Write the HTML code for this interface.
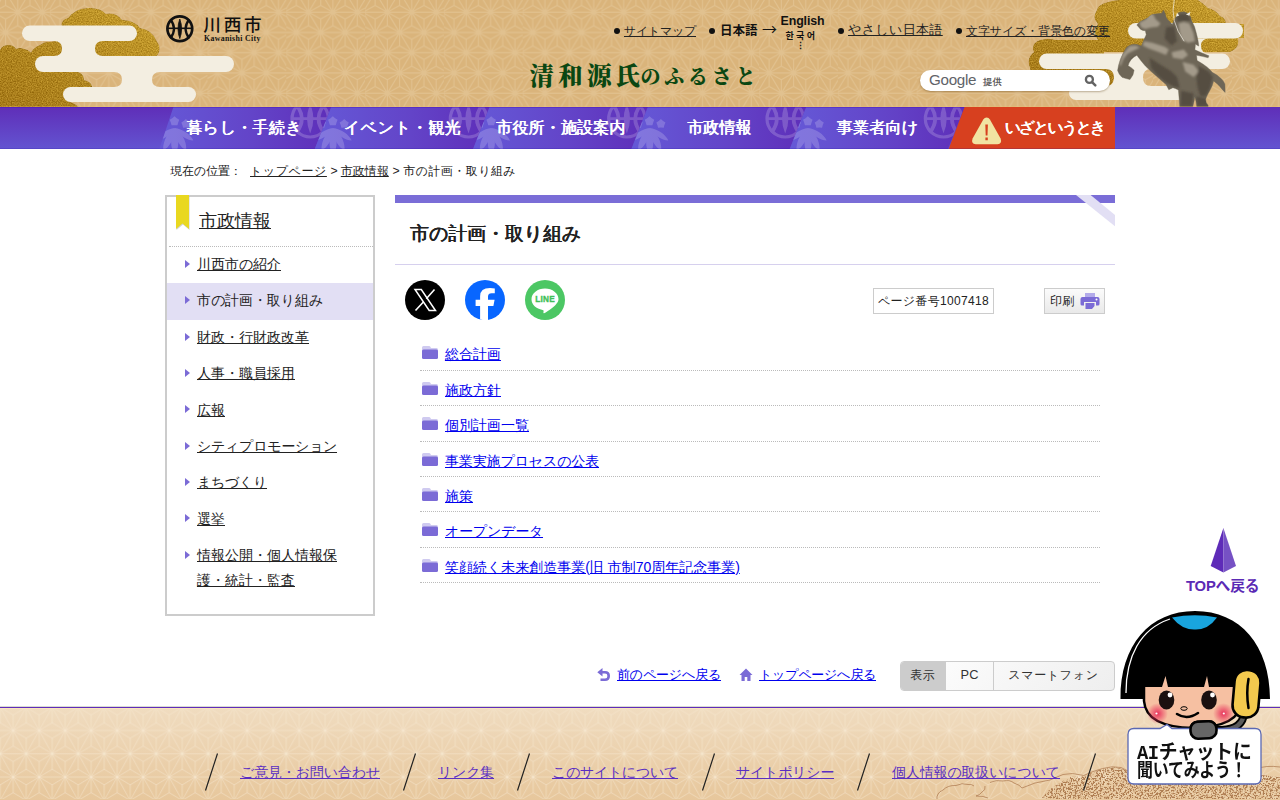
<!DOCTYPE html>
<html lang="ja">
<head>
<meta charset="utf-8">
<title>市の計画・取り組み｜川西市</title>
<style>
*{box-sizing:border-box}
html,body{margin:0;padding:0}
body{width:1280px;height:800px;overflow:hidden;position:relative;background:#fff;color:#222;
 font-family:"Liberation Sans","WenQuanYi Zen Hei Sharp","WenQuanYi Zen Hei",sans-serif;font-size:14px;line-height:1.5}
a{color:#0000ee;text-decoration:underline}
svg{display:block}
/* header */
#hd{position:absolute;left:0;top:0;width:1280px;height:107px;background:#dab47b;overflow:hidden}
#hd:after{content:"";position:absolute;left:0;top:106px;width:1280px;height:1px;background:rgba(240,200,110,.3)}
#hd svg.bg{position:absolute;left:0;top:0}
#logo{position:absolute;left:0;top:0}
#logo svg{position:absolute;left:165px;top:14px}
#logo .jp{position:absolute;left:203.3px;top:10.2px;font-family:"Liberation Sans","Noto Sans CJK JP",sans-serif;font-weight:500;font-size:17.6px;line-height:30px;color:#111;letter-spacing:2.8px;white-space:nowrap}
#logo .en{position:absolute;left:204px;top:33px;font-family:"Liberation Serif",serif;font-weight:bold;font-size:7.8px;line-height:11px;color:#111;white-space:nowrap;letter-spacing:.35px}
#hlinks{position:absolute;top:0;left:0;color:#111}
#hlinks a{color:#222;position:absolute;white-space:nowrap;line-height:16px}
#hlinks i{position:absolute;width:6px;height:6px;border-radius:50%;background:#111}
#hlinks .lang{position:absolute;white-space:nowrap;font-weight:bold;color:#111;font-family:"Liberation Sans","Noto Sans CJK JP",sans-serif}
#catch{position:absolute;left:0;top:0;font-family:"Liberation Serif","Noto Serif CJK JP","Noto Serif CJK SC",serif;font-weight:900;color:#0a4712;white-space:nowrap}
#catch span{position:absolute;line-height:36px}
#search{position:absolute;left:920px;top:70px;width:190px;height:21px;border-radius:11px;background:#fff;box-shadow:0 1px 2px rgba(80,50,0,.35)}
#search .g{position:absolute;left:9px;top:-1px;font-size:15.2px;line-height:21px;color:#5f6368;font-family:"Liberation Sans",sans-serif;letter-spacing:-.3px}
#search .t{position:absolute;left:63px;top:1px;font-size:9.4px;line-height:21px;color:#5a5a5a;font-weight:normal;text-shadow:.4px 0 0 #5a5a5a}
#search svg{position:absolute;left:164px;top:4px}
/* nav */
#nav{position:absolute;left:0;top:107px;width:1280px;height:42px;background:linear-gradient(to bottom,#5f2eb8,#6354d1);overflow:hidden}
#nav:before,#nav:after{content:"";position:absolute;left:0;width:1280px;height:1px;z-index:3}
#nav:before{top:0;width:964px;background:rgba(70,20,190,.4)}
#nav:after{bottom:0;background:rgba(30,10,160,.18)}
#nav svg{position:absolute;left:0;top:0}
#nav .it{position:absolute;top:0;width:158.33px;text-align:center;height:42px;color:#fff;font-weight:normal;text-shadow:.55px 0 0 #fff,-.2px 0 0 #fff;font-size:16px;line-height:42px;white-space:nowrap}
/* breadcrumb */
#pan{position:absolute;left:0;top:162px;color:#222}
#pan>span,#pan>a{position:absolute;top:0;line-height:18px;white-space:nowrap;font-size:12px}
#pan a{color:#222}
/* side */
#side{position:absolute;left:165px;top:195px;width:210px;height:421px;border:2px solid #ccc;background:#fff}
#side h2{position:absolute;left:32px;top:11px;margin:0;font-size:18px;line-height:26px;font-weight:normal}
#side h2 a{color:#222}
#side .rb{position:absolute;left:7px;top:-2px}
#side .hr{position:absolute;left:2px;top:49px;width:204px;border-top:1px dotted #bbb}
#side ul{list-style:none;margin:0;padding:0;position:absolute;left:0;top:50px;width:206px}
#side li{position:relative;padding:5.5px 30px 6.33px 30px;line-height:24.5px;font-size:14px}
#side li a{color:#222}
#side li.cur{background:#e2dff4}
#side li.u{padding-top:4.5px;padding-bottom:7.33px}
#side li:before{content:"";position:absolute;left:18px;top:13px;border-left:5px solid #7b6bd6;border-top:4px solid transparent;border-bottom:4px solid transparent}
/* main */
#main{position:absolute;left:395px;top:194px;width:720px}
#main .bar{position:absolute;left:0;top:1px;width:720px;height:8px;background:#7a6dd7}
#main .cn{position:absolute;left:670px;top:1px}
#main h1{position:absolute;left:15px;top:25px;margin:0;font-size:19px;line-height:30px;font-weight:normal;text-shadow:.6px 0 0 #222,-.2px 0 0 #222;color:#222;white-space:nowrap}
#main .h1b{position:absolute;left:0;top:70px;width:720px;border-top:1px solid #d6d0ee}
.sns{position:absolute;top:86px}
.pnum{position:absolute;left:478px;top:94px;width:121px;height:26px;border:1px solid #ccc;background:#fff;font-size:12px;line-height:24px;text-align:center;white-space:nowrap}
.prt{position:absolute;left:649px;top:94px;width:61px;height:26px;border:1px solid #ccc;background:linear-gradient(to bottom,#fbfbfb,#e9e9e9);font-size:12px;line-height:24px;padding-left:5px;white-space:nowrap}
.prt svg{position:absolute;left:34.5px;top:3px}
#list{position:absolute;left:25px;top:0;width:680px;list-style:none;margin:0;padding:0}
#list li{position:absolute;left:0;width:680px;height:36px;padding:0 0 0 25px;line-height:36px;font-size:14px;white-space:nowrap}
#list li svg{position:absolute;left:2px;top:10px}
#list li i{position:absolute;left:0;width:680px;height:0;border-top:1px dotted #bbb}
/* bottom links */
#back{position:absolute;left:0;top:0;font-size:13px}
#back a{position:absolute;white-space:nowrap;line-height:20px;top:665px}
#back svg{position:absolute}
#sw{position:absolute;left:900px;top:661px;width:215px;height:30px;border:1px solid #ccc;border-radius:4px;overflow:hidden;background:linear-gradient(135deg,#fff,#eee);font-size:12px;color:#333}
#sw span{position:absolute;top:0;height:28px;line-height:26px;text-align:center;white-space:nowrap}
/* footer */
#ft{position:absolute;left:0;top:706px;width:1280px;height:94px;background:linear-gradient(to bottom,#f0dcc0,#e7c79c);border-top:1px solid #d9dbd3;overflow:hidden}
#ft svg.bg{position:absolute;left:0;top:0}
#ft a{position:absolute;top:55px;color:#5a2fc2;font-size:14px;line-height:20px;white-space:nowrap}
/* floats */
#top{position:absolute;left:0;top:0}
#top .t{position:absolute;left:1186px;top:575px;font-family:"Liberation Sans","Noto Sans CJK JP",sans-serif;font-weight:bold;font-size:14.8px;line-height:22px;color:#5b2ab5;white-space:nowrap;letter-spacing:-.2px}
#ai{position:absolute;left:1110px;top:605px}
#ai .tx{position:absolute;left:0;top:0;font-family:"Liberation Sans","Noto Sans CJK JP",sans-serif;font-weight:bold;color:#111;white-space:nowrap}
#ai .tx span{position:absolute;left:27px;line-height:22px;transform-origin:0 50%}
#ai .tx .l1{top:136px;font-size:20px;transform:scaleX(.94);letter-spacing:-.2px}
#ai .tx .l1 b{font-family:"Liberation Mono",monospace;font-size:20px;letter-spacing:-.5px}
#ai .tx .l2{top:155px;font-size:19px;transform:scaleX(.84);letter-spacing:-.3px}
</style>
</head>
<body>
<div id="hd">
<svg class="bg" width="1280" height="107" viewBox="0 0 1280 107">
<defs>
<pattern id="asa" width="78.80" height="40.50" patternUnits="userSpaceOnUse" patternTransform="translate(49.85,0)">
<path d="M-26.50 -28.30L-2.10 -28.30M-26.50 -28.30L-14.30 -8.05M-26.50 -28.30L-38.70 -8.05M-26.50 -28.30L-14.30 -21.55M-26.50 -28.30L-38.70 -21.55M-26.50 -28.30L-14.30 -35.05M-26.50 -28.30L-38.70 -35.05M-26.50 -28.30L-26.50 -14.80M-26.50 -28.30L-26.50 -41.80M-2.10 -28.30L22.30 -28.30M-2.10 -28.30L10.10 -8.05M-2.10 -28.30L-14.30 -8.05M-2.10 -28.30L10.10 -21.55M-2.10 -28.30L-14.30 -21.55M-2.10 -28.30L10.10 -35.05M-2.10 -28.30L-14.30 -35.05M-2.10 -28.30L-2.10 -14.80M-2.10 -28.30L-2.10 -41.80M22.30 -28.30L46.70 -28.30M22.30 -28.30L34.50 -8.05M22.30 -28.30L10.10 -8.05M22.30 -28.30L34.50 -21.55M22.30 -28.30L10.10 -21.55M22.30 -28.30L34.50 -35.05M22.30 -28.30L10.10 -35.05M22.30 -28.30L22.30 -14.80M22.30 -28.30L22.30 -41.80M46.70 -28.30L71.10 -28.30M46.70 -28.30L58.90 -8.05M46.70 -28.30L34.50 -8.05M46.70 -28.30L58.90 -21.55M46.70 -28.30L34.50 -21.55M46.70 -28.30L58.90 -35.05M46.70 -28.30L34.50 -35.05M46.70 -28.30L46.70 -14.80M46.70 -28.30L46.70 -41.80M71.10 -28.30L95.50 -28.30M71.10 -28.30L83.30 -8.05M71.10 -28.30L58.90 -8.05M71.10 -28.30L83.30 -21.55M71.10 -28.30L58.90 -21.55M71.10 -28.30L83.30 -35.05M71.10 -28.30L58.90 -35.05M71.10 -28.30L71.10 -14.80M71.10 -28.30L71.10 -41.80M95.50 -28.30L119.90 -28.30M95.50 -28.30L107.70 -8.05M95.50 -28.30L83.30 -8.05M95.50 -28.30L107.70 -21.55M95.50 -28.30L83.30 -21.55M95.50 -28.30L107.70 -35.05M95.50 -28.30L83.30 -35.05M95.50 -28.30L95.50 -14.80M95.50 -28.30L95.50 -41.80M-14.30 -8.05L10.10 -8.05M-14.30 -8.05L-2.10 12.20M-14.30 -8.05L-26.50 12.20M-14.30 -8.05L-2.10 -1.30M-14.30 -8.05L-26.50 -1.30M-14.30 -8.05L-2.10 -14.80M-14.30 -8.05L-26.50 -14.80M-14.30 -8.05L-14.30 5.45M-14.30 -8.05L-14.30 -21.55M10.10 -8.05L34.50 -8.05M10.10 -8.05L22.30 12.20M10.10 -8.05L-2.10 12.20M10.10 -8.05L22.30 -1.30M10.10 -8.05L-2.10 -1.30M10.10 -8.05L22.30 -14.80M10.10 -8.05L-2.10 -14.80M10.10 -8.05L10.10 5.45M10.10 -8.05L10.10 -21.55M34.50 -8.05L58.90 -8.05M34.50 -8.05L46.70 12.20M34.50 -8.05L22.30 12.20M34.50 -8.05L46.70 -1.30M34.50 -8.05L22.30 -1.30M34.50 -8.05L46.70 -14.80M34.50 -8.05L22.30 -14.80M34.50 -8.05L34.50 5.45M34.50 -8.05L34.50 -21.55M58.90 -8.05L83.30 -8.05M58.90 -8.05L71.10 12.20M58.90 -8.05L46.70 12.20M58.90 -8.05L71.10 -1.30M58.90 -8.05L46.70 -1.30M58.90 -8.05L71.10 -14.80M58.90 -8.05L46.70 -14.80M58.90 -8.05L58.90 5.45M58.90 -8.05L58.90 -21.55M83.30 -8.05L107.70 -8.05M83.30 -8.05L95.50 12.20M83.30 -8.05L71.10 12.20M83.30 -8.05L95.50 -1.30M83.30 -8.05L71.10 -1.30M83.30 -8.05L95.50 -14.80M83.30 -8.05L71.10 -14.80M83.30 -8.05L83.30 5.45M83.30 -8.05L83.30 -21.55M107.70 -8.05L132.10 -8.05M107.70 -8.05L119.90 12.20M107.70 -8.05L95.50 12.20M107.70 -8.05L119.90 -1.30M107.70 -8.05L95.50 -1.30M107.70 -8.05L119.90 -14.80M107.70 -8.05L95.50 -14.80M107.70 -8.05L107.70 5.45M107.70 -8.05L107.70 -21.55M-26.50 12.20L-2.10 12.20M-26.50 12.20L-14.30 32.45M-26.50 12.20L-38.70 32.45M-26.50 12.20L-14.30 18.95M-26.50 12.20L-38.70 18.95M-26.50 12.20L-14.30 5.45M-26.50 12.20L-38.70 5.45M-26.50 12.20L-26.50 25.70M-26.50 12.20L-26.50 -1.30M-2.10 12.20L22.30 12.20M-2.10 12.20L10.10 32.45M-2.10 12.20L-14.30 32.45M-2.10 12.20L10.10 18.95M-2.10 12.20L-14.30 18.95M-2.10 12.20L10.10 5.45M-2.10 12.20L-14.30 5.45M-2.10 12.20L-2.10 25.70M-2.10 12.20L-2.10 -1.30M22.30 12.20L46.70 12.20M22.30 12.20L34.50 32.45M22.30 12.20L10.10 32.45M22.30 12.20L34.50 18.95M22.30 12.20L10.10 18.95M22.30 12.20L34.50 5.45M22.30 12.20L10.10 5.45M22.30 12.20L22.30 25.70M22.30 12.20L22.30 -1.30M46.70 12.20L71.10 12.20M46.70 12.20L58.90 32.45M46.70 12.20L34.50 32.45M46.70 12.20L58.90 18.95M46.70 12.20L34.50 18.95M46.70 12.20L58.90 5.45M46.70 12.20L34.50 5.45M46.70 12.20L46.70 25.70M46.70 12.20L46.70 -1.30M71.10 12.20L95.50 12.20M71.10 12.20L83.30 32.45M71.10 12.20L58.90 32.45M71.10 12.20L83.30 18.95M71.10 12.20L58.90 18.95M71.10 12.20L83.30 5.45M71.10 12.20L58.90 5.45M71.10 12.20L71.10 25.70M71.10 12.20L71.10 -1.30M95.50 12.20L119.90 12.20M95.50 12.20L107.70 32.45M95.50 12.20L83.30 32.45M95.50 12.20L107.70 18.95M95.50 12.20L83.30 18.95M95.50 12.20L107.70 5.45M95.50 12.20L83.30 5.45M95.50 12.20L95.50 25.70M95.50 12.20L95.50 -1.30M-14.30 32.45L10.10 32.45M-14.30 32.45L-2.10 52.70M-14.30 32.45L-26.50 52.70M-14.30 32.45L-2.10 39.20M-14.30 32.45L-26.50 39.20M-14.30 32.45L-2.10 25.70M-14.30 32.45L-26.50 25.70M-14.30 32.45L-14.30 45.95M-14.30 32.45L-14.30 18.95M10.10 32.45L34.50 32.45M10.10 32.45L22.30 52.70M10.10 32.45L-2.10 52.70M10.10 32.45L22.30 39.20M10.10 32.45L-2.10 39.20M10.10 32.45L22.30 25.70M10.10 32.45L-2.10 25.70M10.10 32.45L10.10 45.95M10.10 32.45L10.10 18.95M34.50 32.45L58.90 32.45M34.50 32.45L46.70 52.70M34.50 32.45L22.30 52.70M34.50 32.45L46.70 39.20M34.50 32.45L22.30 39.20M34.50 32.45L46.70 25.70M34.50 32.45L22.30 25.70M34.50 32.45L34.50 45.95M34.50 32.45L34.50 18.95M58.90 32.45L83.30 32.45M58.90 32.45L71.10 52.70M58.90 32.45L46.70 52.70M58.90 32.45L71.10 39.20M58.90 32.45L46.70 39.20M58.90 32.45L71.10 25.70M58.90 32.45L46.70 25.70M58.90 32.45L58.90 45.95M58.90 32.45L58.90 18.95M83.30 32.45L107.70 32.45M83.30 32.45L95.50 52.70M83.30 32.45L71.10 52.70M83.30 32.45L95.50 39.20M83.30 32.45L71.10 39.20M83.30 32.45L95.50 25.70M83.30 32.45L71.10 25.70M83.30 32.45L83.30 45.95M83.30 32.45L83.30 18.95M107.70 32.45L132.10 32.45M107.70 32.45L119.90 52.70M107.70 32.45L95.50 52.70M107.70 32.45L119.90 39.20M107.70 32.45L95.50 39.20M107.70 32.45L119.90 25.70M107.70 32.45L95.50 25.70M107.70 32.45L107.70 45.95M107.70 32.45L107.70 18.95M-26.50 52.70L-2.10 52.70M-26.50 52.70L-14.30 72.95M-26.50 52.70L-38.70 72.95M-26.50 52.70L-14.30 59.45M-26.50 52.70L-38.70 59.45M-26.50 52.70L-14.30 45.95M-26.50 52.70L-38.70 45.95M-26.50 52.70L-26.50 66.20M-26.50 52.70L-26.50 39.20M-2.10 52.70L22.30 52.70M-2.10 52.70L10.10 72.95M-2.10 52.70L-14.30 72.95M-2.10 52.70L10.10 59.45M-2.10 52.70L-14.30 59.45M-2.10 52.70L10.10 45.95M-2.10 52.70L-14.30 45.95M-2.10 52.70L-2.10 66.20M-2.10 52.70L-2.10 39.20M22.30 52.70L46.70 52.70M22.30 52.70L34.50 72.95M22.30 52.70L10.10 72.95M22.30 52.70L34.50 59.45M22.30 52.70L10.10 59.45M22.30 52.70L34.50 45.95M22.30 52.70L10.10 45.95M22.30 52.70L22.30 66.20M22.30 52.70L22.30 39.20M46.70 52.70L71.10 52.70M46.70 52.70L58.90 72.95M46.70 52.70L34.50 72.95M46.70 52.70L58.90 59.45M46.70 52.70L34.50 59.45M46.70 52.70L58.90 45.95M46.70 52.70L34.50 45.95M46.70 52.70L46.70 66.20M46.70 52.70L46.70 39.20M71.10 52.70L95.50 52.70M71.10 52.70L83.30 72.95M71.10 52.70L58.90 72.95M71.10 52.70L83.30 59.45M71.10 52.70L58.90 59.45M71.10 52.70L83.30 45.95M71.10 52.70L58.90 45.95M71.10 52.70L71.10 66.20M71.10 52.70L71.10 39.20M95.50 52.70L119.90 52.70M95.50 52.70L107.70 72.95M95.50 52.70L83.30 72.95M95.50 52.70L107.70 59.45M95.50 52.70L83.30 59.45M95.50 52.70L107.70 45.95M95.50 52.70L83.30 45.95M95.50 52.70L95.50 66.20M95.50 52.70L95.50 39.20" stroke="#e1c18f" stroke-width="1.1" fill="none"/>
</pattern>
<linearGradient id="gold" x1="0" y1="1" x2="1" y2="0">
<stop offset="0" stop-color="#a67a22"/><stop offset=".5" stop-color="#b48a2a"/><stop offset="1" stop-color="#c69d36"/>
</linearGradient>
<filter id="gtex" x="0" y="0" width="100%" height="100%" color-interpolation-filters="sRGB">
<feTurbulence type="fractalNoise" baseFrequency="0.8" numOctaves="2" seed="7" result="n"/>
<feColorMatrix in="n" type="matrix" values="1.6 0 0 0 -0.3  1.6 0 0 0 -0.3  1.2 0 0 0 -0.25  0 0 0 0 1" result="g"/>
<feComposite in="SourceGraphic" in2="g" operator="arithmetic" k1="0" k2="1" k3="0.22" k4="-0.11" result="c"/>
<feComposite in="c" in2="SourceGraphic" operator="in"/>
</filter>
<linearGradient id="hz" x1="0" y1="0" x2="1" y2="1">
<stop offset="0" stop-color="#8f8776"/><stop offset=".5" stop-color="#6a6253"/><stop offset="1" stop-color="#5a5245"/>
</linearGradient>
</defs>
<rect width="1280" height="107" fill="url(#asa)"/>
<!-- left gold -->
<g fill="url(#gold)" filter="url(#gtex)">
<path d="M0 50Q2 45 8.500 45Q14 45 16 49Q19 47.500 23 48.500Q28 49.500 31 52.500Q34 47 40 45Q45 41 51 42Q56 40 62 42L62 28Q60 20 68 18Q76 8 88 8Q100 7 106 14Q116 12 122 20Q134 20 140 28Q152 30 156 40Q162 48 158 54Q156 58 150 57L96 57L96 72L78 72Q84 74 84 80Q92 82 92 87L70 87L70 102Q76 104 78 107L0 107Z"/>
</g>
<!-- right gold -->
<g fill="url(#gold)" filter="url(#gtex)">
<path d="M1096 12 Q1098 4 1108 2 Q1114 0 1120 0 L1198 0 Q1204 4 1208 8 Q1216 10 1220 16 Q1226 18 1226 24 L1244 24 L1244 38 L1238 38 Q1240 48 1230 52 L1104 52 L1104 69 L1106 69 Q1114 69 1114 77.500 Q1114 86 1106 86 L1040 84 Q1030 78 1030 68 Q1026 58 1034 52 Q1030 44 1040 40 Q1048 38 1056 40 L1098 40 Q1092 32 1098 24 Q1092 18 1096 12Z"/>
</g>
<!-- white clouds left -->
<g fill="#f3eee1">
<rect x="22" y="25.5" width="115" height="15.5" rx="7.75"/>
<rect x="35" y="56" width="199" height="16" rx="8"/>
<rect x="63" y="87" width="133" height="15" rx="7.5"/>
<path d="M54 41 H103 Q95 41 95 48.5 Q95 56 103 56 H54 Q62 56 62 48.5 Q62 41 54 41Z"/>
<path d="M114 72 H160 Q152 72 152 79.5 Q152 87 160 87 H114 Q122 87 122 79.5 Q122 72 114 72Z"/>
</g>
<!-- white clouds right -->
<g fill="#f3eee1">
<rect x="1128" y="23" width="115" height="15.5" rx="7.75"/>
<rect x="1039" y="53.5" width="191" height="15.5" rx="7.75"/>
<rect x="1069" y="86" width="128" height="14" rx="7"/>
<path d="M1150 38.500 H1209 Q1201 38.500 1201 46 Q1201 53.500 1209 53.500 H1150 Q1158 53.500 1158 46 Q1158 38.500 1150 38.500Z"/>
<path d="M1106 69H1151Q1143 69 1143 77.500Q1143 86 1151 86H1106Q1114 86 1114 77.500Q1114 69 1106 69Z"/>
</g>
<!-- statue -->
<g transform="translate(1100,0) scale(.13755)">
<clipPath id="hcl"><path id="hsil" d="M268 182Q282 160 300 152Q330 140 350 128Q372 100 400 102Q430 98 448 96L462 74L474 100Q478 125 490 140Q510 160 525 178Q535 150 548 130Q552 112 566 104L572 90L592 88L612 86L640 98Q660 112 666 150Q690 190 700 240Q716 300 718 335Q700 326 694 320L690 362Q740 386 792 406L786 420Q740 408 702 402L706 440Q745 462 782 490Q800 505 816 526Q855 545 882 572Q900 590 908 610L910 672Q890 655 872 630Q850 605 826 588Q818 625 800 655Q780 690 768 720Q766 745 786 765L786 778L704 778Q700 740 690 705Q684 740 674 778L580 778Q576 720 570 655Q545 640 530 638L500 652L480 614Q450 590 420 562Q370 520 330 480Q295 440 268 402Q240 415 225 435Q210 455 204 478Q228 490 248 510Q246 545 218 578Q190 572 160 562Q138 545 128 512Q134 470 148 432Q162 395 186 355Q196 338 210 332Q240 316 272 324L300 334Q314 300 336 252L330 224Q310 222 296 214Z"/></clipPath>
<filter id="hbl" x="-20%" y="-20%" width="140%" height="140%"><feGaussianBlur stdDeviation="6"/></filter>
<g>
<use href="#hsil" fill="#6e6657" stroke="#6e6657" stroke-width="3" stroke-linejoin="round"/>
<g clip-path="url(#hcl)">
<g filter="url(#hbl)">
<path fill="#b0a897" opacity=".8" d="M285 165L335 140L355 105L385 100L405 140L440 170L420 195L370 200L330 210L300 200Z M320 300L380 310L470 340L500 360L480 400L430 380L350 350L310 330Z M570 170L610 160L650 170L680 240L690 300L640 310L600 290L580 240Z M215 335L260 330L290 345L250 365L200 390L170 430L150 480L140 470L165 395Z M520 380L610 360L640 400L600 430L530 420Z M600 450L680 470L720 520L680 560L620 520Z"/>
<path fill="#453e32" opacity=".6" d="M360 420L440 470L520 520L560 560L580 640L540 630L480 600L420 550L370 490Z M720 480L790 520L820 560L800 640L770 700L730 700L710 640L700 560Z M590 660L680 680L670 775L585 775Z M555 115L590 100L640 105L660 150L600 155L565 160Z M225 430L260 405L290 440L250 470L210 480Z M700 700L780 720L785 775L705 775Z M480 200L540 190L560 300L520 330L470 280Z"/>
</g>
</g>
</g>
<path fill="none" stroke="#f6f2e8" stroke-width="5" d="M540 0Q522 80 540 150Q560 230 612 300"/>
<path fill="#f2eee2" d="M552 122L560 92L576 112Z M625 105L658 86L650 114Z"/>
</g>
</svg>
<div id="logo">
<svg width="30" height="30" viewBox="0 0 30 30">
<circle cx="14.8" cy="14.8" r="12.4" fill="none" stroke="#111" stroke-width="2.7"/>
<path d="M2.5 14.3H27.2" stroke="#111" stroke-width="1.6" fill="none"/>
<path d="M14.8 5Q18.400 14.8 14.8 24.6Q11.200 14.8 14.8 5Z" fill="#111" stroke="#111" stroke-width=".8"/>
<path d="M5.3 5.2Q12.7 14.8 5.3 24.4" fill="none" stroke="#111" stroke-width="2.3"/>
<path d="M24.3 5.2Q16.9 14.8 24.3 24.4" fill="none" stroke="#111" stroke-width="2.3"/>
</svg>
<span class="jp">川西市</span><span class="en">Kawanishi City</span></div>
<div id="hlinks">
<i style="left:614px;top:28px"></i><a href="#" style="letter-spacing:-0.281px;left:624px;top:23px;font-size:12px">サイトマップ</a>
<i style="left:709px;top:28px"></i>
<span class="lang" style="left:720px;top:22px;font-size:12.5px;line-height:18px">日本語</span>
<span class="lang" style="left:762px;top:20px;font-size:15px;line-height:18px;font-weight:normal;font-family:'Noto Sans CJK JP','Liberation Sans',sans-serif">→</span>
<span class="lang" style="left:780.5px;top:11.5px;font-size:12.4px;line-height:18px;letter-spacing:-.1px">English</span>
<span class="lang" style="left:785.5px;top:28.4px;font-size:9px;line-height:16px;letter-spacing:2.3px;font-family:'Liberation Sans','Noto Sans CJK KR','NanumGothic',sans-serif">한국어</span>
<span class="lang" style="left:796px;top:39.5px;font-size:9px;line-height:12px">⋮</span>
<i style="left:838px;top:27.5px"></i><a href="#" style="letter-spacing:0.359px;left:848px;top:22px;font-size:13px">やさしい日本語</a>
<i style="left:956px;top:27.5px"></i><a href="#" style="letter-spacing:-0.094px;left:966px;top:23px;font-size:12px">文字サイズ・背景色の変更</a>
</div>
<div id="catch" aria-label="清和源氏のふるさと"><span style="left:529.5px;top:59px;font-size:24.5px;letter-spacing:4.2px;font-weight:900">清和源氏</span><span style="left:640.5px;top:58.5px;font-size:20px;letter-spacing:3.75px">のふるさと</span></div>
<div id="search"><span class="g">Google</span><span class="t">提供</span>
<svg width="14" height="14" viewBox="0 0 14 14"><circle cx="5.4" cy="5.4" r="3.5" fill="none" stroke="#636363" stroke-width="2.3"/><path d="M8.3 8.3L11.300 11.300" stroke="#636363" stroke-width="2.500" stroke-linecap="round"/></svg>
</div>
</div>
<div id="nav">
<svg width="1280" height="42" viewBox="0 0 1280 42">
<defs>
<linearGradient id="ng" x1="0" y1="0" x2="1" y2="0">
<stop offset="0" stop-color="#6559d7"/><stop offset=".55" stop-color="#6344c8"/><stop offset="1" stop-color="#5e2eb9"/>
</linearGradient>
<g id="crest" fill="#fff" opacity=".19"><path d="M0.30 9.60L2.59 11.44L5.06 13.05L4.01 15.81L3.24 18.65L0.30 18.50L-2.64 18.65L-3.41 15.81L-4.46 13.05L-1.99 11.44ZM11.70 12.40L13.87 14.21L16.27 15.72L15.22 18.34L14.52 21.08L11.70 20.90L8.88 21.08L8.18 18.34L7.13 15.72L9.53 14.21ZM-11.10 12.40L-8.93 14.21L-6.53 15.72L-7.58 18.34L-8.28 21.08L-11.10 20.90L-13.92 21.08L-14.62 18.34L-15.67 15.72L-13.27 14.21Z"/><path transform="translate(0.5 21.3) rotate(0)" d="M0 0C4.80 8.10 4.80 20.25 0 27.00C-4.80 20.25 -4.80 8.10 0 0Z"/><path transform="translate(0.5 21.3) rotate(-27)" d="M0 0C4.50 7.50 4.50 18.75 0 25.00C-4.50 18.75 -4.50 7.50 0 0Z"/><path transform="translate(0.5 21.3) rotate(27)" d="M0 0C4.50 7.50 4.50 18.75 0 25.00C-4.50 18.75 -4.50 7.50 0 0Z"/><path transform="translate(0.5 21.3) rotate(-56)" d="M0 0C3.60 6.75 3.60 16.88 0 22.50C-3.60 16.88 -3.60 6.75 0 0Z"/><path transform="translate(0.5 21.3) rotate(56)" d="M0 0C3.60 6.75 3.60 16.88 0 22.50C-3.60 16.88 -3.60 6.75 0 0Z"/></g>
<g id="emb" fill="none" stroke="#fff" opacity=".19" transform="scale(1.445) translate(-14.8 -14.8)">
<circle cx="14.8" cy="14.8" r="12.6" stroke-width="2.2"/>
<path d="M2.5 14.6H27.2" stroke-width="1.9"/>
<path d="M14.8 4.6Q19.2 14.8 14.8 25Q10.400 14.8 14.8 4.6Z" fill="#fff" stroke="none"/>
<path d="M5.3 5.2Q12.7 14.8 5.3 24.4" stroke-width="2.6"/>
<path d="M24.3 5.2Q16.9 14.8 24.3 24.4" stroke-width="2.6"/>
</g>
<linearGradient id="nbg" x1="0" y1="0" x2="0" y2="1"><stop offset="0" stop-color="#5f2eb8"/><stop offset="1" stop-color="#6354d1"/></linearGradient>
<clipPath id="c0"><path d="M172.800 0H331.100L314.800 42H156.500Z"/></clipPath>
</defs>
<g id="nv0">
<path d="M172.800 0H331.100L314.800 42H156.500Z" fill="url(#ng)"/>
<g clip-path="url(#c0)"><use href="#crest" x="174.2" y="-0.3"/><g transform="translate(310.2 11.8)"><use href="#emb"/></g></g>
</g>
<path d="M0 0H173.400L159.400 42H0Z" fill="url(#nbg)"/>
<use href="#nv0" x="158.330"/>
<use href="#nv0" x="316.660"/>
<use href="#nv0" x="475"/>
<use href="#nv0" x="633.330"/>
<path d="M964.600 0H1115V42H948.600Z" fill="#d7401f"/>
<path d="M986.600 10.500Q984.500 10.500 983.300 12.500L972.600 31.500Q970.800 36.800 975.600 37.300H997.600Q1002.400 36.800 1000.600 31.500L989.900 12.500Q988.700 10.500 986.600 10.500Z" fill="#f1e3a2"/>
<path d="M985.300 17.500H987.900L987.500 28.500H985.700Z M985.400 30.600H987.800V33.300H985.400Z" fill="#d7401f"/>
</svg>
<div class="it" style="letter-spacing:0.423px;left:165px">暮らし・手続き</div>
<div class="it" style="letter-spacing:0.619px;left:323.33px">イベント・観光</div>
<div class="it" style="letter-spacing:0.214px;left:481.67px">市役所・施設案内</div>
<div class="it" style="left:640px">市政情報</div>
<div class="it" style="letter-spacing:0.275px;left:798.33px">事業者向け</div>
<div class="it" style="letter-spacing:-2.141px;left:1004.5px;width:auto;text-align:left">いざというとき</div>
</div>
<div id="pan"><span style="letter-spacing:-0.047px;left:170px">現在の位置：</span><a href="#" style="letter-spacing:0.58px;left:250px">トップページ</a><span style="left:330.5px;font-size:12.3px">&gt;</span><a href="#" style="left:340.8px">市政情報</a><span style="left:392.5px;font-size:12.3px">&gt;</span><span style="letter-spacing:0.431px;left:403.3px">市の計画・取り組み</span></div>
<div id="side">
<svg class="rb" width="17" height="36" viewBox="0 0 17 36"><path d="M2.500 1.500H15.500V35L9 29.500L2.500 35Z" fill="#000" opacity=".18"/><path d="M2 0H15V34L8.500 28.500L2 34Z" fill="#e9d820"/></svg>
<h2><a href="#">市政情報</a></h2>
<div class="hr"></div>
<ul>
<li class="u"><a href="#" style="letter-spacing:-0.055px">川西市の紹介</a></li>
<li class="cur u" style="letter-spacing:-0.109px">市の計画・取り組み</li>
<li><a href="#">財政・行財政改革</a></li>
<li><a href="#">人事・職員採用</a></li>
<li><a href="#">広報</a></li>
<li><a href="#" style="letter-spacing:-0.295px">シティプロモーション</a></li>
<li><a href="#" style="letter-spacing:-0.328px">まちづくり</a></li>
<li><a href="#">選挙</a></li>
<li><a href="#">情報公開・個人情報保護・統計・監査</a></li>
</ul>
</div>
<div id="main">
<div class="bar"></div>
<svg class="cn" width="50" height="34" viewBox="0 0 50 34"><path d="M11 0H25.600L50 20V31.300Z" fill="#e2dff4"/></svg>
<h1 style="letter-spacing:-0.148px">市の計画・取り組み</h1>
<div class="h1b"></div>
<svg class="sns" style="left:10px" width="40" height="40" viewBox="0 0 40 40"><circle cx="20" cy="20" r="20" fill="#000"/><path d="M10 9.500H16.300L30.500 30.500H24.200Z" fill="none" stroke="#fff" stroke-width="1.500"/><path d="M29.500 9.500L21.300 18.800M18.600 21.800L10.500 30.500" stroke="#fff" stroke-width="1.600" fill="none"/></svg>
<svg class="sns" style="left:70px" width="40" height="40" viewBox="0 0 40 40"><circle cx="20" cy="20" r="20" fill="#0866ff"/><path d="M23 40V25.900H28.400L29.600 19.700H23V16.600Q23 13.200 26.600 13.200H29.800V8.400Q27.500 7.900 25 7.900Q15.100 7.900 15.100 16.200V19.700H10.600V25.900H15.100V39.600Q19 40.400 23 40Z" fill="#fff"/></svg>
<svg class="sns" style="left:130px" width="40" height="40" viewBox="0 0 40 40"><circle cx="20" cy="20" r="20" fill="#4cc764"/><path d="M20 8.500C12.500 8.500 6.500 13.300 6.500 19.300C6.500 24.600 11.200 29 17.600 29.900C18.900 30.200 18.700 30.700 18.400 32.500C18.300 33.200 18.700 33.500 19.500 33C21 32.200 27.500 28.300 30.500 24.900C32.500 22.800 33.500 21.100 33.500 19.300C33.500 13.300 27.500 8.500 20 8.500Z" fill="#fff"/><text x="20.100" y="22.200" text-anchor="middle" font-family="Liberation Sans,sans-serif" font-weight="bold" font-size="8.200" fill="#3fbf58" stroke="#3fbf58" stroke-width=".35" letter-spacing=".3">LINE</text></svg>
<div class="pnum" style="letter-spacing:0.326px">ページ番号1007418</div>
<div class="prt">印刷<svg width="20" height="18" viewBox="0 0 20 18"><path d="M5 1H15V5H5Z" fill="#b3abea"/><path d="M2.500 5H17.500Q19.500 5 19.500 7V12Q19.500 13.500 18 13.500H16V10H4V13.500H2Q.5 13.500 .5 12V7Q.5 5 2.500 5Z" fill="#7b6bd6"/><path d="M5.500 11H14.500V14L12 17H5.500Z" fill="#7b6bd6"/><circle cx="16.500" cy="7.500" r="1" fill="#fff"/></svg></div>
<ul id="list">
<li style="top:142px"><svg width="17" height="14" viewBox="0 0 17 14"><use href="#fold"/></svg><a href="#">総合計画</a><i style="top:34px"></i></li>
<li style="top:178px"><svg width="17" height="14" viewBox="0 0 17 14"><use href="#fold"/></svg><a href="#">施政方針</a><i style="top:33px"></i></li>
<li style="top:213px"><svg width="17" height="14" viewBox="0 0 17 14"><use href="#fold"/></svg><a href="#">個別計画一覧</a><i style="top:34px"></i></li>
<li style="top:249px"><svg width="17" height="14" viewBox="0 0 17 14"><use href="#fold"/></svg><a href="#" style="letter-spacing:-0.149px">事業実施プロセスの公表</a><i style="top:33px"></i></li>
<li style="top:284px"><svg width="17" height="14" viewBox="0 0 17 14"><use href="#fold"/></svg><a href="#">施策</a><i style="top:33px"></i></li>
<li style="top:319px"><svg width="17" height="14" viewBox="0 0 17 14"><use href="#fold"/></svg><a href="#" style="letter-spacing:-0.234px">オープンデータ</a><i style="top:34px"></i></li>
<li style="top:355px"><svg width="17" height="14" viewBox="0 0 17 14"><use href="#fold"/></svg><a href="#" style="letter-spacing:-0.014px">笑顔続く未来創造事業(旧 市制70周年記念事業)</a><i style="top:33px"></i></li>
</ul>
</div>
<svg width="0" height="0" style="position:absolute"><defs><g id="fold"><path d="M1.500 0H7Q8 0 8.500 1L9 2H14.500Q16 2 16 3.500V6H0V1.500Q0 0 1.500 0Z" fill="#cfcaf0"/><path d="M1.500 3.500H14.500Q16 3.500 16 5V11.500Q16 13 14.500 13H1.500Q0 13 0 11.500V5Q0 3.500 1.500 3.500Z" fill="#7b6bd6"/></g></defs></svg>
<div id="back">
<svg style="left:597px;top:668px" width="14" height="14" viewBox="0 0 14 14"><path d="M5.500 0V3H8Q13 3 13 8Q13 13 8 13H3.500V10.500H8Q10.400 10.500 10.400 8Q10.400 5.600 8 5.600H5.500V8.600L.3 4.300Z" fill="#7b6bd6"/></svg>
<a href="#" style="letter-spacing:-0.19px;left:617px">前のページへ戻る</a>
<svg style="left:739px;top:668px" width="14" height="14" viewBox="0 0 14 14"><path d="M7 .5L13.500 7H11.500V13H8.300V9H5.700V13H2.500V7H.5Z" fill="#7b6bd6"/></svg>
<a href="#" style="letter-spacing:-0.237px;left:759px">トップページへ戻る</a>
</div>
<div id="sw"><span style="left:0;width:45px;background:#ccc;text-indent:-2px">表示</span><span style="left:45px;width:48px;border-right:1px solid #ccc;font-size:12.8px">PC</span><span style="letter-spacing:0.659px;left:92.5px;width:120px">スマートフォン</span></div>
<div id="ft">
<svg class="bg" width="1280" height="92" viewBox="0 0 1280 92">
<defs>
<pattern id="asa2" width="26.00" height="46.60" patternUnits="userSpaceOnUse" patternTransform="translate(13.2,23.5)">
<path d="M-39.00 -23.30L-13.00 -23.30M-39.00 -23.30L-26.00 0.00M-39.00 -23.30L-52.00 0.00M-39.00 -23.30L-26.00 -15.53M-39.00 -23.30L-52.00 -15.53M-39.00 -23.30L-26.00 -31.07M-39.00 -23.30L-52.00 -31.07M-39.00 -23.30L-39.00 -7.77M-39.00 -23.30L-39.00 -38.83M-13.00 -23.30L13.00 -23.30M-13.00 -23.30L0.00 0.00M-13.00 -23.30L-26.00 0.00M-13.00 -23.30L0.00 -15.53M-13.00 -23.30L-26.00 -15.53M-13.00 -23.30L0.00 -31.07M-13.00 -23.30L-26.00 -31.07M-13.00 -23.30L-13.00 -7.77M-13.00 -23.30L-13.00 -38.83M13.00 -23.30L39.00 -23.30M13.00 -23.30L26.00 0.00M13.00 -23.30L0.00 0.00M13.00 -23.30L26.00 -15.53M13.00 -23.30L0.00 -15.53M13.00 -23.30L26.00 -31.07M13.00 -23.30L0.00 -31.07M13.00 -23.30L13.00 -7.77M13.00 -23.30L13.00 -38.83M39.00 -23.30L65.00 -23.30M39.00 -23.30L52.00 0.00M39.00 -23.30L26.00 0.00M39.00 -23.30L52.00 -15.53M39.00 -23.30L26.00 -15.53M39.00 -23.30L52.00 -31.07M39.00 -23.30L26.00 -31.07M39.00 -23.30L39.00 -7.77M39.00 -23.30L39.00 -38.83M65.00 -23.30L91.00 -23.30M65.00 -23.30L78.00 0.00M65.00 -23.30L52.00 0.00M65.00 -23.30L78.00 -15.53M65.00 -23.30L52.00 -15.53M65.00 -23.30L78.00 -31.07M65.00 -23.30L52.00 -31.07M65.00 -23.30L65.00 -7.77M65.00 -23.30L65.00 -38.83M-26.00 0.00L0.00 0.00M-26.00 0.00L-13.00 23.30M-26.00 0.00L-39.00 23.30M-26.00 0.00L-13.00 7.77M-26.00 0.00L-39.00 7.77M-26.00 0.00L-13.00 -7.77M-26.00 0.00L-39.00 -7.77M-26.00 0.00L-26.00 15.53M-26.00 0.00L-26.00 -15.53M0.00 0.00L26.00 0.00M0.00 0.00L13.00 23.30M0.00 0.00L-13.00 23.30M0.00 0.00L13.00 7.77M0.00 0.00L-13.00 7.77M0.00 0.00L13.00 -7.77M0.00 0.00L-13.00 -7.77M0.00 0.00L0.00 15.53M0.00 0.00L0.00 -15.53M26.00 0.00L52.00 0.00M26.00 0.00L39.00 23.30M26.00 0.00L13.00 23.30M26.00 0.00L39.00 7.77M26.00 0.00L13.00 7.77M26.00 0.00L39.00 -7.77M26.00 0.00L13.00 -7.77M26.00 0.00L26.00 15.53M26.00 0.00L26.00 -15.53M52.00 0.00L78.00 0.00M52.00 0.00L65.00 23.30M52.00 0.00L39.00 23.30M52.00 0.00L65.00 7.77M52.00 0.00L39.00 7.77M52.00 0.00L65.00 -7.77M52.00 0.00L39.00 -7.77M52.00 0.00L52.00 15.53M52.00 0.00L52.00 -15.53M-39.00 23.30L-13.00 23.30M-39.00 23.30L-26.00 46.60M-39.00 23.30L-52.00 46.60M-39.00 23.30L-26.00 31.07M-39.00 23.30L-52.00 31.07M-39.00 23.30L-26.00 15.53M-39.00 23.30L-52.00 15.53M-39.00 23.30L-39.00 38.83M-39.00 23.30L-39.00 7.77M-13.00 23.30L13.00 23.30M-13.00 23.30L0.00 46.60M-13.00 23.30L-26.00 46.60M-13.00 23.30L0.00 31.07M-13.00 23.30L-26.00 31.07M-13.00 23.30L0.00 15.53M-13.00 23.30L-26.00 15.53M-13.00 23.30L-13.00 38.83M-13.00 23.30L-13.00 7.77M13.00 23.30L39.00 23.30M13.00 23.30L26.00 46.60M13.00 23.30L0.00 46.60M13.00 23.30L26.00 31.07M13.00 23.30L0.00 31.07M13.00 23.30L26.00 15.53M13.00 23.30L0.00 15.53M13.00 23.30L13.00 38.83M13.00 23.30L13.00 7.77M39.00 23.30L65.00 23.30M39.00 23.30L52.00 46.60M39.00 23.30L26.00 46.60M39.00 23.30L52.00 31.07M39.00 23.30L26.00 31.07M39.00 23.30L52.00 15.53M39.00 23.30L26.00 15.53M39.00 23.30L39.00 38.83M39.00 23.30L39.00 7.77M65.00 23.30L91.00 23.30M65.00 23.30L78.00 46.60M65.00 23.30L52.00 46.60M65.00 23.30L78.00 31.07M65.00 23.30L52.00 31.07M65.00 23.30L78.00 15.53M65.00 23.30L52.00 15.53M65.00 23.30L65.00 38.83M65.00 23.30L65.00 7.77M-26.00 46.60L0.00 46.60M-26.00 46.60L-13.00 69.90M-26.00 46.60L-39.00 69.90M-26.00 46.60L-13.00 54.37M-26.00 46.60L-39.00 54.37M-26.00 46.60L-13.00 38.83M-26.00 46.60L-39.00 38.83M-26.00 46.60L-26.00 62.13M-26.00 46.60L-26.00 31.07M0.00 46.60L26.00 46.60M0.00 46.60L13.00 69.90M0.00 46.60L-13.00 69.90M0.00 46.60L13.00 54.37M0.00 46.60L-13.00 54.37M0.00 46.60L13.00 38.83M0.00 46.60L-13.00 38.83M0.00 46.60L0.00 62.13M0.00 46.60L0.00 31.07M26.00 46.60L52.00 46.60M26.00 46.60L39.00 69.90M26.00 46.60L13.00 69.90M26.00 46.60L39.00 54.37M26.00 46.60L13.00 54.37M26.00 46.60L39.00 38.83M26.00 46.60L13.00 38.83M26.00 46.60L26.00 62.13M26.00 46.60L26.00 31.07M52.00 46.60L78.00 46.60M52.00 46.60L65.00 69.90M52.00 46.60L39.00 69.90M52.00 46.60L65.00 54.37M52.00 46.60L39.00 54.37M52.00 46.60L65.00 38.83M52.00 46.60L39.00 38.83M52.00 46.60L52.00 62.13M52.00 46.60L52.00 31.07M-39.00 69.90L-13.00 69.90M-39.00 69.90L-26.00 93.20M-39.00 69.90L-52.00 93.20M-39.00 69.90L-26.00 77.67M-39.00 69.90L-52.00 77.67M-39.00 69.90L-26.00 62.13M-39.00 69.90L-52.00 62.13M-39.00 69.90L-39.00 85.43M-39.00 69.90L-39.00 54.37M-13.00 69.90L13.00 69.90M-13.00 69.90L0.00 93.20M-13.00 69.90L-26.00 93.20M-13.00 69.90L0.00 77.67M-13.00 69.90L-26.00 77.67M-13.00 69.90L0.00 62.13M-13.00 69.90L-26.00 62.13M-13.00 69.90L-13.00 85.43M-13.00 69.90L-13.00 54.37M13.00 69.90L39.00 69.90M13.00 69.90L26.00 93.20M13.00 69.90L0.00 93.20M13.00 69.90L26.00 77.67M13.00 69.90L0.00 77.67M13.00 69.90L26.00 62.13M13.00 69.90L0.00 62.13M13.00 69.90L13.00 85.43M13.00 69.90L13.00 54.37M39.00 69.90L65.00 69.90M39.00 69.90L52.00 93.20M39.00 69.90L26.00 93.20M39.00 69.90L52.00 77.67M39.00 69.90L26.00 77.67M39.00 69.90L52.00 62.13M39.00 69.90L26.00 62.13M39.00 69.90L39.00 85.43M39.00 69.90L39.00 54.37M65.00 69.90L91.00 69.90M65.00 69.90L78.00 93.20M65.00 69.90L52.00 93.20M65.00 69.90L78.00 77.67M65.00 69.90L52.00 77.67M65.00 69.90L78.00 62.13M65.00 69.90L52.00 62.13M65.00 69.90L65.00 85.43M65.00 69.90L65.00 54.37" stroke="#f6e8d3" stroke-width=".9" fill="none" opacity=".55"/>
</pattern>
<filter id="spk" x="0" y="0" width="100%" height="100%">
<feTurbulence type="fractalNoise" baseFrequency="0.6" numOctaves="2" seed="11" result="n"/>
<feColorMatrix in="n" type="matrix" values="0 0 0 0 0  0 0 0 0 0  0 0 0 0 0  0 0 0 -7 3.7" result="m"/>
<feComposite in="SourceGraphic" in2="m" operator="in"/>
</filter>
</defs>
<rect width="1280" height="92" fill="url(#asa2)"/>
<rect width="1280" height="1" fill="#5f2cba"/><rect y="1" width="1280" height="1" fill="#f8e5bf"/>
<g fill="#a8744a" opacity=".9" filter="url(#spk)">
<path d="M1040 93L1050 82L1063 74L1072.500 69L1083.800 69.500L1093 65L1102.500 62L1112 60.300L1121 61L1129 65L1150 70L1200 73L1240 72L1262 68L1280 70V93Z"/>
</g>
<g fill="none" stroke="#a8744a" stroke-width=".8" opacity=".85">
<path d="M1022 81L1035 76L1050 73L1063 67.500L1072.500 66.500L1083.800 68.500L1093 64.500L1102.500 61.500L1112 59.800L1121 60.500L1129 64.500"/>
<path d="M937 93Q936 86 943 83Q948 78 956 78.500Q962 75.500 968 77.500Q972 77 974 79"/>
<path d="M985 79Q986 83 982 85Q980 88 976 89Q984 89 988 91"/>
<path d="M990 75.500Q996 72.500 1003 74Q1010 72.500 1014 76Q1020 78 1022 81"/>
<path d="M1236 64Q1246 60 1256 62Q1266 58 1280 60"/>
</g>
<g stroke="#222" stroke-width="1.2" fill="none">
<path d="M205.500 83.500L217.500 46.500M403.500 83.500L415.500 46.500M517.500 83.500L529.500 46.500M702.500 83.500L714.500 46.500M857.500 83.500L869.500 46.500M1083.500 83.500L1095.500 46.500"/>
</g>
</svg>
<a href="#" style="letter-spacing:-0.164px;left:240px">ご意見・お問い合わせ</a>
<a href="#" style="letter-spacing:-0.246px;left:438px">リンク集</a>
<a href="#" style="letter-spacing:-0.328px;left:552px">このサイトについて</a>
<a href="#" style="letter-spacing:-0.281px;left:736px">サイトポリシー</a>
<a href="#" style="letter-spacing:-0.164px;left:892px">個人情報の取扱いについて</a>
</div>
<div id="top">
<svg style="position:absolute;left:1205px;top:524px" width="36" height="52" viewBox="0 0 36 52"><path d="M18.400 3.900L5.700 41.900L18.400 48.600Z" fill="#5e2bb8"/><path d="M18.400 3.900L31 41.900L18.400 48.600Z" fill="#7651c4"/></svg>
<div class="t">TOPへ戻る</div>
</div>
<div id="ai">
<svg width="170" height="195" viewBox="0 0 170 195">
<defs><radialGradient id="ck"><stop offset="0" stop-color="#e8305a"/><stop offset="1" stop-color="#e8305a" stop-opacity="0"/></radialGradient></defs>
<!-- face -->
<path d="M34 68H132V96Q130 122 83 123Q36 122 34 96Z" fill="#f6c0a2" stroke="#000" stroke-width="2.500"/>
<circle cx="47.500" cy="108.500" r="10.500" fill="url(#ck)"/><circle cx="113.500" cy="108.500" r="10.500" fill="url(#ck)"/><circle cx="46.500" cy="108.500" r="1.100" fill="#fff"/><circle cx="113.800" cy="108.500" r="1.100" fill="#fff"/>
<ellipse cx="56.500" cy="95" rx="7.800" ry="9.500" fill="#1a1010"/><ellipse cx="99" cy="95" rx="7.800" ry="9.500" fill="#1a1010"/>
<circle cx="60" cy="90" r="2.400" fill="#fff"/><circle cx="102.500" cy="90" r="2.400" fill="#fff"/>
<ellipse cx="74" cy="103.500" rx="3.200" ry="1.800" fill="#f6c0a2" stroke="#000" stroke-width="1"/>
<path d="M67 109Q77 115.500 88 108" fill="none" stroke="#000" stroke-width="2.600" stroke-linecap="round"/>
<!-- hair -->
<path d="M10.500 94C10 40 40 6 85 6C130 6 160 40 160 94H132V82H99L97 71L94 82H58L55.500 71L52 82H35V94Z" fill="#000"/>
<path d="M16 88C16 52 30 24 60 14" fill="none" stroke="#fff" stroke-width="1.300"/>
<path d="M62 12.500Q85 8 107 12.500Q98 25 85 24.500Q72 25 62 12.500Z" fill="#19a5de"/>
<!-- headset -->
<path d="M134 108Q133 124 112 125H100" fill="none" stroke="#000" stroke-width="8" stroke-linecap="round"/>
<path d="M134 108Q133 124 112 125H100" fill="none" stroke="#5c5c5c" stroke-width="4.200" stroke-linecap="round"/>
<rect x="123.500" y="65" width="26" height="47.500" rx="12" fill="#f3c94e" stroke="#000" stroke-width="2.600" transform="rotate(5 136 89)"/>
<path d="M138.500 74Q136 88 138.500 103" fill="none" stroke="#000" stroke-width="2.500" stroke-linecap="round"/>
<rect x="80.500" y="116.500" width="26" height="17" rx="7.500" fill="#666" stroke="#000" stroke-width="2.600" transform="rotate(-3 93 125)"/>
<!-- bubble -->
<path d="M24 123.500H50L57 119.500L62 123.500H145Q151 123.500 151 129.500V173Q151 179 145 179H24Q18 179 18 173V129.500Q18 123.500 24 123.500Z" fill="#fff" stroke="#5a68b3" stroke-width="1.300"/>
<rect x="80.500" y="116.500" width="26" height="17" rx="7.500" fill="#666" stroke="#000" stroke-width="2.600" transform="rotate(-3 93 125)"/>
</svg>
<div class="tx" aria-label="AIチャットに聞いてみよう！"><span class="l1"><b>AI</b>チャットに</span><span class="l2">聞いてみよう！</span></div>
</div>
</body>
</html>
